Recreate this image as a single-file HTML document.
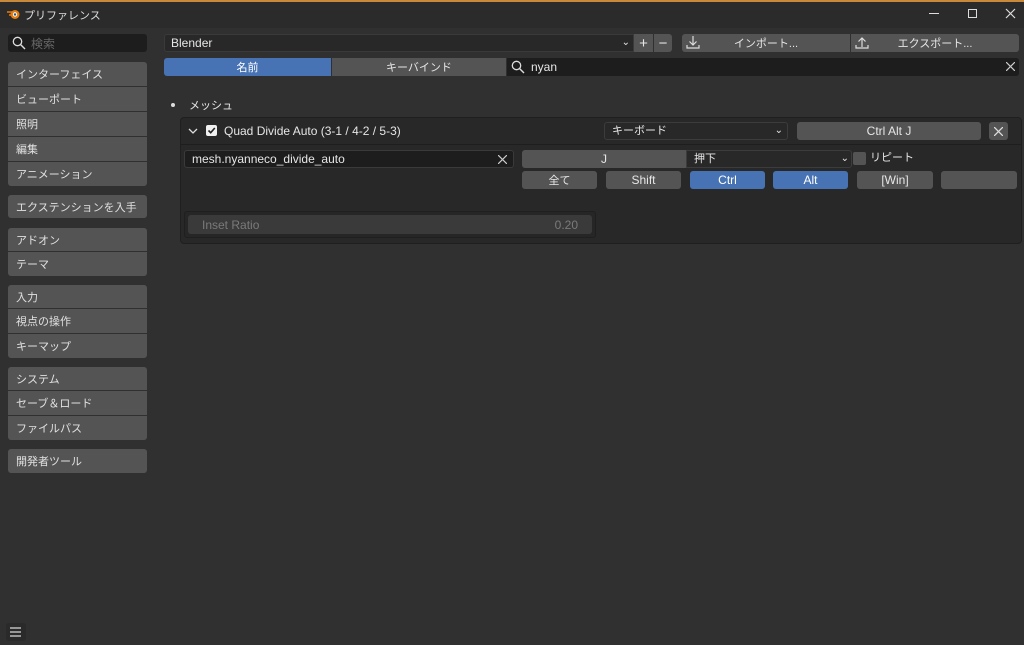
<!DOCTYPE html>
<html><head><meta charset="utf-8"><style>
*{box-sizing:border-box;margin:0;padding:0}
body{width:1024px;height:645px;background:#303030;font-family:"Liberation Sans","Noto Sans CJK JP",sans-serif;font-size:12px;color:#e6e6e6;position:relative;overflow:hidden}
.a{position:absolute;white-space:nowrap}
.btn{position:absolute;background:#545454;border-radius:3px;display:flex;align-items:center;justify-content:center;color:#e6e6e6;font-size:12px;white-space:nowrap}
.blue{background:#4772b3;color:#fff}
.side{position:absolute;left:8px;width:139px;background:#545454;color:#e0e0e0;padding-left:8px;display:flex;align-items:center;font-size:11px;white-space:nowrap;overflow:hidden}
.fld{position:absolute;background:#1d1d1d;border-radius:3px;display:flex;align-items:center;padding-left:7px;color:#e6e6e6;white-space:nowrap}
</style></head><body>
<div class="a" style="left:0;top:0;width:1024px;height:2px;background:#c88a3a"></div>
<div class="a" style="left:0;top:2px;width:1024px;height:26px;background:#2b2b2b"></div>
<svg class="a" style="left:7px;top:8px" width="14" height="12" viewBox="0 0 14 12"><circle cx="8" cy="6.5" r="4.5" fill="#e87d0d"/><circle cx="8" cy="6.5" r="2.2" fill="#fff"/><circle cx="8" cy="6.5" r="1.2" fill="#265787"/><path d="M0 4h5M2 7h4" stroke="#e87d0d" stroke-width="1.5"/></svg>
<div class="a" style="left:24px;top:7px;font-size:11px;color:#ddd">プリファレンス</div>
<div class="a" style="left:929px;top:13px;width:10px;height:1px;background:#ddd"></div>
<div class="a" style="left:968px;top:9px;width:9px;height:9px;border:1px solid #ddd"></div>
<svg class="a" style="left:1005px;top:8px" width="11" height="11"><path d="M1 1L10 10M10 1L1 10" stroke="#ddd" stroke-width="1.2"/></svg>

<div class="fld" style="left:8px;top:34px;width:139px;height:18px;padding-left:4px"><svg width="14" height="14"><circle cx="5.5" cy="5.5" r="4.2" stroke="#ddd" fill="none" stroke-width="1.3"/><path d="M8.5 8.5L13 13" stroke="#ddd" stroke-width="1.4"/></svg><span style="color:#666;margin-left:5px">検索</span></div>

<div class="side" style="top:62px;height:24px;border-radius:3px 3px 0 0">インターフェイス</div>
<div class="side" style="top:87px;height:24px">ビューポート</div>
<div class="side" style="top:112px;height:24px">照明</div>
<div class="side" style="top:137px;height:24px">編集</div>
<div class="side" style="top:162px;height:24px;border-radius:0 0 3px 3px">アニメーション</div>
<div class="side" style="top:195px;height:23px;border-radius:3px">エクステンションを入手</div>
<div class="side" style="top:228px;height:23px;border-radius:3px 3px 0 0">アドオン</div>
<div class="side" style="top:252px;height:24px;border-radius:0 0 3px 3px">テーマ</div>
<div class="side" style="top:285px;height:23px;border-radius:3px 3px 0 0">入力</div>
<div class="side" style="top:309px;height:24px">視点の操作</div>
<div class="side blue" style="top:334px;height:24px;border-radius:0 0 3px 3px">キーマップ</div>
<div class="side" style="top:367px;height:23px;border-radius:3px 3px 0 0">システム</div>
<div class="side" style="top:391px;height:24px">セーブ＆ロード</div>
<div class="side" style="top:416px;height:24px;border-radius:0 0 3px 3px">ファイルパス</div>
<div class="side" style="top:449px;height:24px;border-radius:3px">開発者ツール</div>

<div class="a" style="left:164px;top:34px;width:470px;height:18px;background:#282828;border:1px solid #3a3a3a;border-radius:3px 0 0 3px;padding-left:6px;line-height:16px">Blender<span style="position:absolute;right:3px;top:0;font-size:10px">⌄</span></div>
<div class="btn" style="left:634px;top:34px;width:19px;height:18px;border-radius:0;font-size:15px">+</div>
<div class="btn" style="left:654px;top:34px;width:18px;height:18px;border-radius:0 3px 3px 0;font-size:15px">−</div>
<div class="btn" style="left:682px;top:34px;width:168px;height:18px;border-radius:3px 0 0 3px;font-size:11px">インポート...</div>
<div class="btn" style="left:851px;top:34px;width:168px;height:18px;border-radius:0 3px 3px 0;font-size:11px">エクスポート...</div>
<svg class="a" style="left:686px;top:35px" width="14" height="15"><path d="M7 1v9M3.5 6.5L7 10l3.5-3.5M1 10v3h12v-3" stroke="#ddd" fill="none" stroke-width="1.2"/></svg>
<svg class="a" style="left:855px;top:35px" width="14" height="15"><path d="M7 12V3M3.5 6.5L7 3l3.5 3.5M1 10v3h12v-3" stroke="#ddd" fill="none" stroke-width="1.2"/></svg>

<div class="btn blue" style="left:164px;top:58px;width:167px;height:18px;border-radius:3px 0 0 3px;font-size:11px">名前</div>
<div class="btn" style="left:332px;top:58px;width:174px;height:18px;border-radius:0;font-size:11px">キーバインド</div>
<div class="fld" style="left:507px;top:58px;width:512px;height:18px;border-radius:0 3px 3px 0;padding-left:4px"><svg width="14" height="14"><circle cx="5.5" cy="5.5" r="4.2" stroke="#ddd" fill="none" stroke-width="1.3"/><path d="M8.5 8.5L13 13" stroke="#ddd" stroke-width="1.4"/></svg><span style="margin-left:6px">nyan</span></div>
<svg class="a" style="left:1006px;top:62px" width="9" height="9"><path d="M0 0L9 9M9 0L0 9" stroke="#ccc" stroke-width="1.2"/></svg>

<div class="a" style="left:171px;top:103px;width:4px;height:4px;border-radius:2px;background:#ddd"></div>
<div class="a" style="left:189px;top:97px;font-size:11px">メッシュ</div>

<div class="a" style="left:180px;top:117px;width:842px;height:127px;background:#282828;border:1px solid #1f1f1f;border-radius:4px"></div>
<div class="a" style="left:181px;top:144px;width:840px;height:1px;background:#1e1e1e"></div>
<svg class="a" style="left:188px;top:127px" width="10" height="8"><path d="M1 2l4 4 4-4" stroke="#ddd" fill="none" stroke-width="1.3"/></svg>
<div class="a" style="left:206px;top:125px;width:11px;height:11px;background:#f0f0f0;border-radius:2px"></div>
<svg class="a" style="left:207px;top:126px" width="9" height="9"><path d="M1.5 4.5l2.2 2.2L7.8 2" stroke="#222" fill="none" stroke-width="1.6"/></svg>
<div class="a" style="left:224px;top:124px">Quad Divide Auto (3-1 / 4-2 / 5-3)</div>
<div class="a" style="left:604px;top:122px;width:184px;height:18px;background:#282828;border:1px solid #3c3c3c;border-radius:3px;padding-left:7px;line-height:16px;font-size:11px">キーボード<span style="position:absolute;right:4px;top:0;font-size:10px">⌄</span></div>
<div class="btn" style="left:797px;top:122px;width:184px;height:18px">Ctrl Alt J</div>
<div class="btn" style="left:989px;top:122px;width:19px;height:18px"><svg width="9" height="9"><path d="M0 0L9 9M9 0L0 9" stroke="#ddd" stroke-width="1.3"/></svg></div>

<div class="fld" style="left:184px;top:150px;width:330px;height:18px;border:1px solid #3a3a3a">mesh.nyanneco_divide_auto</div>
<svg class="a" style="left:498px;top:155px" width="9" height="9"><path d="M0 0L9 9M9 0L0 9" stroke="#ccc" stroke-width="1.2"/></svg>
<div class="btn" style="left:522px;top:150px;width:164px;height:18px;border-radius:3px 0 0 3px">J</div>
<div class="a" style="left:686px;top:150px;width:166px;height:18px;background:#282828;border:1px solid #3c3c3c;border-radius:0 3px 3px 0;padding-left:7px;line-height:16px;font-size:11px">押下<span style="position:absolute;right:2px;top:0;font-size:10px">⌄</span></div>
<div class="a" style="left:853px;top:152px;width:13px;height:13px;background:#545454;border-radius:2px"></div>
<div class="a" style="left:870px;top:151px;font-size:11px;line-height:14px">リピート</div>
<div class="btn" style="left:522px;top:171px;width:75px;height:18px;font-size:11px">全て</div>
<div class="btn" style="left:606px;top:171px;width:75px;height:18px">Shift</div>
<div class="btn blue" style="left:690px;top:171px;width:75px;height:18px">Ctrl</div>
<div class="btn blue" style="left:773px;top:171px;width:75px;height:18px">Alt</div>
<div class="btn" style="left:857px;top:171px;width:76px;height:18px">[Win]</div>
<div class="btn" style="left:941px;top:171px;width:76px;height:18px"></div>

<div class="a" style="left:184px;top:211px;width:412px;height:27px;background:#262626;border:1px solid #1f1f1f;border-radius:3px"></div>
<div class="a" style="left:188px;top:215px;width:404px;height:19px;background:#3a3a3a;border-radius:3px;color:#7a7a7a;padding:0 14px;display:flex;justify-content:space-between;align-items:center"><span>Inset Ratio</span><span>0.20</span></div>

<div class="a" style="left:6px;top:623px;width:20px;height:18px;background:#2a2a2a;border-radius:3px"></div>
<svg class="a" style="left:9px;top:626px" width="14" height="12"><path d="M1 2h11M1 6h11M1 10h11" stroke="#bbb" stroke-width="1.5"/></svg>
</body></html>
